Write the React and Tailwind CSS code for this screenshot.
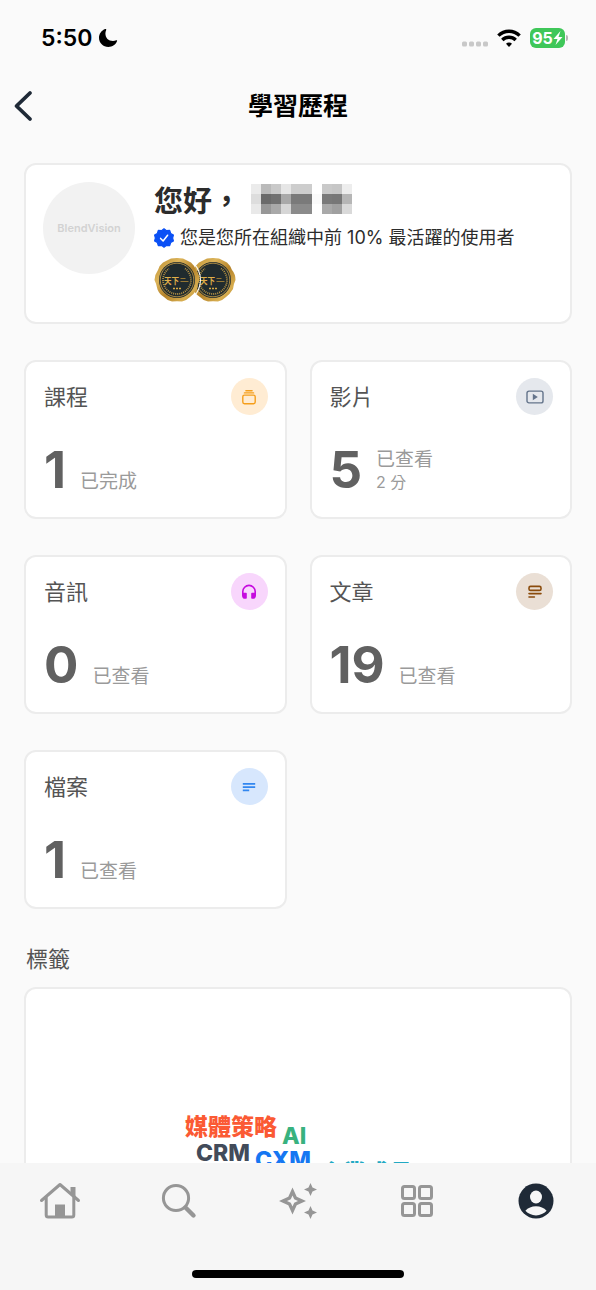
import { useState } from 'react'

const STATS = [
  { id: 'course',  label: '課程', value: 1,  status: '已完成', iconCls: 'text-[#f59e1b] bg-[#ffecd3]', Icon: CourseIcon },
  { id: 'video',   label: '影片', value: 5,  status: '已查看', extra: '2 分', iconCls: 'text-[#64748b] bg-[#e5e8ed]', Icon: VideoIcon },
  { id: 'audio',   label: '音訊', value: 0,  status: '已查看', iconCls: 'text-[#c60adf] bg-[#f8d6fc]', Icon: AudioIcon },
  { id: 'article', label: '文章', value: 19, status: '已查看', iconCls: 'text-[#8a4b0c] bg-[#eadfd5]', Icon: ArticleIcon },
  { id: 'file',    label: '檔案', value: 1,  status: '已查看', iconCls: 'text-[#3287f0] bg-[#d7e7fd]', Icon: FileIcon },
]

const TAGS = [
  { text: '媒體策略', cls: 'left-[159px] top-[126px] text-[#fb5a34]' },
  { text: 'AI',       cls: 'left-[256px] top-[135px] text-[#38b27f]' },
  { text: 'CRM',      cls: 'left-[170px] top-[152px] text-[#424b5a]' },
  { text: 'CXM',      cls: 'left-[229px] top-[159px] text-[#1677f2]' },
  { text: '企業成長', cls: 'left-[294px] top-[172px] text-[#22a9c3]' },
]

const NAV = [
  { id: 'home',    label: '首頁', Icon: HomeIcon },
  { id: 'search',  label: '搜尋', Icon: SearchIcon },
  { id: 'explore', label: '探索', Icon: SparkleIcon },
  { id: 'apps',    label: '分類', Icon: GridIcon },
  { id: 'profile', label: '我的', Icon: ProfileIcon },
]

// Grey levels of the masked user name, row by row
const MASK = [
  ['#ebebeb', '#bababa', '#c9c9c9', '#e6e6e6', '#cdcdcd', '#cdcdcd', '#ffffff', '#c9c9c9', '#c6c6c6', '#ededed'],
  ['#dddddd', '#6a6a6a', '#717171', '#a9a9a9', '#7a7a7a', '#7a7a7a', '#fafafa', '#797979', '#777777', '#b6b6b6'],
  ['#e9e9e9', '#979797', '#a9a9a9', '#d6d6d6', '#8b8b8b', '#8b8b8b', '#ffffff', '#a9a9a9', '#a0a0a0', '#d9d9d9'],
]

function CourseIcon() {
  return (
    <svg viewBox="0 0 18 18" className="w-[18px] h-[18px]" fill="none" stroke="currentColor" strokeWidth="1.4" strokeLinecap="round">
      <rect x="2.8" y="7.1" width="12.4" height="8.6" rx="1.6" />
      <path d="M4.4 4.9h9.2M5.9 2.7h6.2" />
    </svg>
  )
}

function VideoIcon() {
  return (
    <svg viewBox="0 0 18 18" className="w-[18px] h-[18px]" fill="none" stroke="currentColor" strokeWidth="1.4">
      <rect x="1" y="3.1" width="16" height="11.8" rx="2" />
      <path d="M6.8 5.8v6.4L11.8 9z" fill="currentColor" stroke="none" />
    </svg>
  )
}

function AudioIcon() {
  return (
    <svg viewBox="0 0 18 18" className="w-[18px] h-[18px]" fill="currentColor">
      <path d="M9 1.600a7 7 0 0 0-7 7v3.800c0 2 1.200 3.400 3 3.400h1c.5 0 .8-.3.8-.8v-4.400c0-.5-.3-.8-.8-.8H3.600V8.600a5.400 5.400 0 0 1 10.800 0v1.200H12c-.5 0-.8.3-.8.8V15c0 .5.3.8.8.8h1c1.800 0 3-1.400 3-3.400V8.600a7 7 0 0 0-7-7z" />
    </svg>
  )
}

function ArticleIcon() {
  return (
    <svg viewBox="0 0 18 18" className="w-[18px] h-[18px]" fill="none" stroke="currentColor" strokeWidth="1.6" strokeLinecap="round">
      <rect x="3" y="3.4" width="12" height="4" rx="1.5" />
      <path d="M3 10.6h12M3 14h5.4" />
    </svg>
  )
}

function FileIcon() {
  return (
    <svg viewBox="0 0 18 18" className="w-[18px] h-[18px]" fill="none" stroke="currentColor" strokeWidth="1.7">
      <path d="M2.8 5.8h12.4M2.8 9.2h12.4M2.8 12.4h6.4" />
    </svg>
  )
}

function HomeIcon() {
  return (
    <svg viewBox="0 0 42 38" className="w-[42px] h-[38px]" fill="none" stroke="currentColor" strokeWidth="3" strokeLinecap="round" strokeLinejoin="round">
      <path d="M2.5 18.5 21 2.5 39.5 18.5" />
      <path d="M7.2 15.5V33a2 2 0 0 0 2 2h23.6a2 2 0 0 0 2-2V15.5" />
      <path d="M31.5 5h5v10.5l-5-4z" fill="currentColor" stroke="none" />
      <path d="M16 22.5h10V36H16z" fill="currentColor" stroke="none" />
    </svg>
  )
}

function SearchIcon() {
  return (
    <svg viewBox="0 0 38 38" className="w-[38px] h-[38px]" fill="none" stroke="currentColor" strokeLinecap="round">
      <circle cx="16" cy="16" r="12.6" strokeWidth="3" />
      <path d="m26 26 7.500 7.500" strokeWidth="4.4" />
    </svg>
  )
}

function SparkleIcon() {
  return (
    <svg viewBox="0 0 38 38" className="w-[38px] h-[38px]" fill="currentColor">
      <path fillRule="evenodd" d="M13.500 5.500 17.700 14.800 27 19 17.700 23.200 13.500 32.500 9.300 23.200 0 19 9.300 14.800zM13.500 13.500l-1.700 3.800L8 19l3.800 1.700 1.700 3.800 1.700-3.800L19 19l-3.800-1.700z" />
      <path d="m31.500 1 2 4.500L38 7.500l-4.500 2-2 4.500-2-4.500-4.500-2 4.500-2zM31.500 24l2 4.500 4.500 2-4.500 2-2 4.500-2-4.500-4.500-2 4.500-2z" />
    </svg>
  )
}

function GridIcon() {
  return (
    <svg viewBox="0 0 34 34" className="w-[34px] h-[34px]" fill="none" stroke="currentColor" strokeWidth="3">
      <rect x="2.5" y="2.5" width="12" height="12" rx="2" />
      <rect x="19.5" y="2.5" width="12" height="12" rx="2" />
      <rect x="2.5" y="19.5" width="12" height="12" rx="2" />
      <rect x="19.5" y="19.5" width="12" height="12" rx="2" />
    </svg>
  )
}

function ProfileIcon() {
  return (
    <svg viewBox="0 0 36 36" className="w-[36px] h-[36px]">
      <circle cx="18" cy="18" r="17.5" fill="#1f2a37" />
      <ellipse cx="18" cy="14" rx="6" ry="6.5" fill="#f6f6f6" />
      <path d="M7.4 27.800c2.500-3 6.300-4.600 10.600-4.600s8.100 1.600 10.600 4.600c-2.700 2.800-6.300 4.600-10.600 4.600s-7.900-1.800-10.600-4.600z" fill="#f6f6f6" />
    </svg>
  )
}

function VerifiedIcon() {
  return (
    <svg viewBox="0 0 20 20" className="w-5 h-5 flex-shrink-0">
      <path
        d="M10 .8l2.500 1.900 3.200-.3 1 3L19.400 7 18.600 10l.8 3-2.700 1.600-1 3-3.200-.3L10 19.200l-2.500-1.900-3.200.3-1-3L.6 13l.8-3-.8-3 2.700-1.600 1-3 3.200.3z"
        fill="#0b50f5" stroke="#0b50f5" strokeWidth="1.2" strokeLinejoin="round"
      />
      <path d="m6.600 10.400 2.500 2.600 4.500-5.800" fill="none" stroke="#fff" strokeWidth="1.5" strokeLinecap="round" strokeLinejoin="round" />
    </svg>
  )
}

function MedalIcon() {
  return (
    <svg viewBox="0 0 46 46" className="w-[46px] h-[46px]">
      <defs>
        <linearGradient id="medal-gold" x1="0" y1="0" x2="1" y2="1">
          <stop offset="0" stopColor="#b98a2c" />
          <stop offset=".3" stopColor="#dcb45a" />
          <stop offset=".55" stopColor="#b5832a" />
          <stop offset=".8" stopColor="#d8ae50" />
          <stop offset="1" stopColor="#a87722" />
        </linearGradient>
      </defs>
      <path
        d="M17 1.500Q23 .500 29 1.500Q33 3.500 37 5.500Q40.500 8.500 42 13Q45.500 17 45.500 23Q43.500 27 43 32Q40 37 36 40Q32.500 43.500 28 44.500Q23 44 18 44.500Q13 43.500 10 40Q5.500 37.500 3.500 32.500Q2.500 27 .500 23Q1 17 4 13Q5.500 8 9 5.500Q13 3.500 17 1.500Z"
        fill="url(#medal-gold)"
      />
      <circle cx="23" cy="23" r="18" fill="#202b2e" />
      <circle cx="23" cy="23" r="16.800" fill="none" stroke="#c9a04a" strokeWidth=".8" />
      <path d="M31 11.500a14 14 0 1 1-16 0" fill="none" stroke="#b99445" strokeWidth="1.8" strokeDasharray="1 1" />
      <text x="10" y="26.500" fontSize="7.500" fontWeight="700" fill="#e0b04a">天下</text>
      <path d="M26.500 21.500h5M26.500 24.500h8" stroke="#b48a36" strokeWidth=".8" />
      <path d="M19 31.500h8" stroke="#d6a845" strokeWidth="1.5" strokeDasharray="2 1" />
    </svg>
  )
}

function MaskedName() {
  return (
    <svg viewBox="0 0 100 30" className="self-start mt-0.5 w-[101px] h-[30px]" shapeRendering="crispEdges" preserveAspectRatio="none">
      {MASK.map((row, y) =>
        row.map((fill, x) => <rect key={`${x}-${y}`} x={x * 10} y={y * 10} width="10" height="10" fill={fill} />)
      )}
    </svg>
  )
}

function StatusBar() {
  return (
    <div className="flex items-center justify-between pl-[41px] pr-7 pt-6 text-black">
      <div className="flex items-center gap-[6px]">
        <span className="text-[23px] leading-7 font-semibold">5:50</span>
        <svg viewBox="0 0 20 20" className="w-5 h-5" fill="currentColor">
          <path d="M7.200 1C3.500 2.400 1 5.800 1 9.800 1 15 5.200 19 10.400 19c4 0 7.400-2.400 8.700-5.900.2-.6-.3-1-.9-.8-1 .4-2.100.6-3.200.6-4.600 0-7.600-3-7.600-7.500 0-1.300.3-2.500.8-3.500.3-.6-.3-1.200-1-.9z" />
        </svg>
      </div>
      <div className="flex items-center">
        <svg viewBox="0 0 28 6" className="w-[28px] h-[6px] mt-3 mr-2" fill="#c8c8c8">
          <rect x="1" y=".5" width="5" height="5" rx="1.5" />
          <rect x="8" y=".5" width="5" height="5" rx="1.5" />
          <rect x="15" y=".5" width="5" height="5" rx="1.5" />
          <rect x="22" y=".5" width="5" height="5" rx="1.5" />
        </svg>
        <svg viewBox="0 0 24 18" className="w-6 h-[18px] mr-[9px]" fill="none" stroke="currentColor" strokeWidth="3.4">
          <path d="M1.400 6.600a15 15 0 0 1 21.200 0" />
          <path d="M5.300 11a9.500 9.500 0 0 1 13.400 0" />
          <path d="M12 18l-3-3.300a4.200 4.200 0 0 1 6 0z" fill="currentColor" stroke="none" />
        </svg>
        <div className="flex items-center gap-px">
          <div className="flex items-center justify-center w-[35px] h-5 rounded-md bg-[#3fc759] text-white">
            <span className="text-base leading-5 font-bold">95</span>
            <svg viewBox="0 0 10 14" className="w-[10px] h-[14px]" fill="currentColor">
              <path d="M7.500 0 .5 8h4L2.500 14l7-8h-4z" />
            </svg>
          </div>
          <span className="w-[2px] h-[6px] rounded-r-full bg-[#b5b5b5]" />
        </div>
      </div>
    </div>
  )
}

function StatCard({ stat }) {
  const { label, value, status, extra, iconCls, Icon } = stat
  return (
    <div className="bg-white rounded-xl border-2 border-[#ececec] pl-[18px] pr-[17px] pt-4 pb-[22px]">
      <div className="flex items-center justify-between">
        <h2 className="text-[22px] leading-8 text-[#545454]">{label}</h2>
        <div className={`w-[37px] h-[37px] rounded-full flex items-center justify-center ${iconCls}`}>
          <Icon />
        </div>
      </div>
      <div className="flex gap-[14px] mt-[30px] h-[50px] [align-items:last_baseline]">
        <span className="text-[51px] leading-[50px] font-bold text-[#616161]">{value}</span>
        <div className="text-[#9a9a9a]">
          <div className="text-[19px] leading-[22px]">{status}</div>
          {extra && <div className="text-base leading-[22px]">{extra}</div>}
        </div>
      </div>
    </div>
  )
}

export default function App() {
  const [active, setActive] = useState('profile')

  return (
    <div className="h-screen flex flex-col bg-[#fafafa] font-[Inter,'Noto_Sans_CJK_TC',sans-serif]">
      <StatusBar />

      {/* Header */}
      <header className="grid grid-cols-[48px_1fr_48px] items-center mt-9 mb-[39px]">
        <button aria-label="返回" className="pl-3 text-[#1f2a37]">
          <svg viewBox="0 0 22 32" className="w-[22px] h-8" fill="none" stroke="currentColor" strokeWidth="3.8" strokeLinecap="round" strokeLinejoin="round">
            <path d="M18 3 4.500 16 18 29" />
          </svg>
        </button>
        <h1 className="text-center text-[25px] leading-9 font-bold text-black">學習歷程</h1>
      </header>

      <main className="flex-1 min-h-0 overflow-y-auto px-6 [scrollbar-width:none]">
        {/* Greeting */}
        <section className="flex gap-[19px] bg-white rounded-xl border-2 border-[#ececec] px-[17px] pt-[17px] pb-[19px]">
          <div className="w-[92px] h-[92px] flex-shrink-0 rounded-full bg-[#f2f2f2] flex items-center justify-center text-[11px] font-semibold text-[#d2d2d2]">
            BlendVision
          </div>
          <div>
            <div className="flex items-center gap-[10px] h-10">
              <span className="text-[29px] leading-10 font-bold text-[#2c2c2c]">您好，</span>
              <MaskedName />
            </div>
            <div className="flex items-center gap-[6px] text-lg leading-8 text-[#2c2c2c]">
              <VerifiedIcon />
              您是您所在組織中前 10% 最活躍的使用者
            </div>
            <div className="flex mt-[3px]">
              <div className="relative z-10 rounded-full ring-1 ring-white">
                <MedalIcon />
              </div>
              <div className="-ml-[10px]">
                <MedalIcon />
              </div>
            </div>
          </div>
        </section>

        {/* Stats */}
        <section className="grid grid-cols-2 gap-x-[23px] gap-y-9 mt-9">
          {STATS.map((stat) => <StatCard key={stat.id} stat={stat} />)}
        </section>

        {/* Tags */}
        <h2 className="mt-[34px] mb-3 pl-0.5 text-[22px] leading-8 text-[#545454]">標籤</h2>
        <section className="relative h-[360px] mb-6 bg-white rounded-xl border-2 border-[#ececec]">
          {TAGS.map((tag) => (
            <span key={tag.text} className={`absolute text-[23px] leading-6 font-extrabold whitespace-nowrap ${tag.cls}`}>
              {tag.text}
            </span>
          ))}
        </section>
      </main>

      {/* Bottom navigation */}
      <nav className="bg-[#f6f6f6] pt-4 pb-3">
        <div className="grid grid-cols-5">
          {NAV.map(({ id, label, Icon }) => (
            <button
              key={id}
              aria-label={label}
              aria-current={active === id ? 'page' : undefined}
              onClick={() => setActive(id)}
              className="h-11 flex items-center justify-center text-[#969696]"
            >
              <Icon />
            </button>
          ))}
        </div>
        <div className="w-[212px] h-2 mt-[47px] mx-auto rounded-full bg-black" />
      </nav>
    </div>
  )
}
